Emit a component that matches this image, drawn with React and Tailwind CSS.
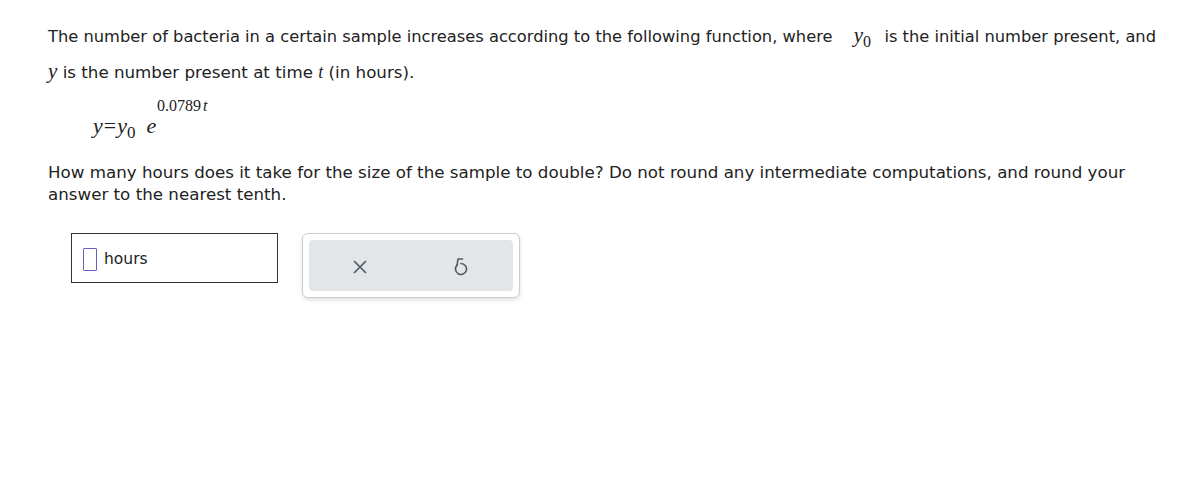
import React from "react";

function Y0() {
  return (
    <span className="font-['Liberation_Serif',serif] text-[21px] ml-[16px] mr-[3px]">
      <i>y</i>
      <span className="text-[16px] relative top-[5px]">0</span>
    </span>
  );
}

export default function App() {
  return (
    <div className="w-[1194px] h-[484px] bg-white text-[#222] font-['DejaVu_Sans',Verdana,sans-serif] text-[16.3px]">
      <div className="pl-[48px] pt-[23px]">
        <p className="leading-[25px] h-[25px] whitespace-nowrap">
          The number of bacteria in a certain sample increases according to the following function, where{" "}
          <Y0 />
          &nbsp; is the initial number present, and
        </p>
        <p className="mt-[11px] leading-[25px] whitespace-nowrap text-[16.7px]">
          <i className="font-['Liberation_Serif',serif] text-[21px]">y</i> is the number present at time{" "}
          <i className="font-['Liberation_Serif',serif] text-[18px]">t</i> (in hours).
        </p>

        <div className="mt-[12px] ml-[45px] h-[50px] relative font-['Liberation_Serif',serif] text-[22px]">
          <div className="absolute left-0 top-[12px] whitespace-nowrap">
            <i>y</i>
            <span className="mx-[1px]">=</span>
            <i>y</i>
            <span className="text-[17px] relative top-[5px]">0</span>
            <i className="ml-[11px]">e</i>
          </div>
          <div className="absolute left-[64px] top-[-3px] text-[16px] whitespace-nowrap">
            0.0789<i className="ml-[2px]">t</i>
          </div>
        </div>

        <p className="mt-[14px] leading-[22px] w-[1100px] text-[16.7px]">
          How many hours does it take for the size of the sample to double? Do not round any intermediate computations, and round your answer to the nearest tenth.
        </p>

        <div className="mt-[28px] ml-[23px] flex items-start gap-[24px]">
          <div className="w-[207px] h-[50px] border border-[#333] flex items-center pl-[11px] pt-[3px]">
            <div className="w-[14px] h-[23px] border-[1.5px] border-[#6a5fc1] rounded-[1px]" />
            <span className="ml-[7px] text-[15.5px] text-[#222]">hours</span>
          </div>
          <div className="w-[218px] h-[65px] rounded-[6px] border border-[#c9ccd0] bg-white p-[6px] shadow-[0_2px_4px_rgba(0,0,0,0.12)]">
            <div className="w-full h-full rounded-[4px] bg-[#e3e6e9] flex items-center">
              <div className="w-1/2 flex justify-center">
                <svg width="14" height="14" viewBox="0 0 14 14" className="mt-[2px]">
                  <path d="M1.5 1.5 L12.5 12.5 M12.5 1.5 L1.5 12.5" stroke="#505b66" strokeWidth="1.7" strokeLinecap="round" />
                </svg>
              </div>
              <div className="w-1/2 flex justify-center">
                <svg width="16" height="20" viewBox="0 0 16 20" className="mr-[2px]">
                  <path d="M4.1 9.1 A5.5 5.5 0 1 0 8 7.5" fill="none" stroke="#505b66" strokeWidth="1.6" strokeLinecap="round" />
                  <path d="M9.5 3 L5 3 L4.1 9.1" fill="none" stroke="#505b66" strokeWidth="1.6" strokeLinecap="round" strokeLinejoin="round" />
                </svg>
              </div>
            </div>
          </div>
        </div>
      </div>
    </div>
  );
}
